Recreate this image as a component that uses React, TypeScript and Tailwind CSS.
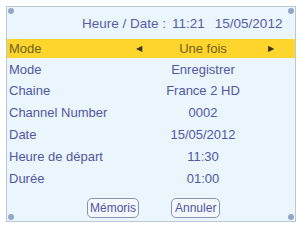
const rows = [
  { label: 'Mode', value: 'Enregistrer' },
  { label: 'Chaine', value: 'France 2 HD' },
  { label: 'Channel Number', value: '0002' },
  { label: 'Date', value: '15/05/2012' },
  { label: 'Heure de départ', value: '11:30' },
  { label: 'Durée', value: '01:00' },
]

function Dot({ className }: { className: string }) {
  return <div className={`absolute w-[6px] h-[6px] rounded-full bg-[#93a8c6] ${className}`} />
}

export default function App() {
  return (
    <div className="w-[301px] h-[226px] bg-white p-[6px] pr-[5px] pb-[4px] font-['Liberation_Sans',Arial,sans-serif]">
      <div className="relative h-full bg-[#ebf6fc] border border-[#b9c9d9] flex flex-col text-[13px] text-[#5257a2]">
        <Dot className="left-[1px] top-[1px]" />
        <Dot className="right-[1px] top-[1px]" />
        <Dot className="left-[1px] bottom-[1px]" />
        <Dot className="right-[1px] bottom-[1px]" />

        <div className="h-[32px] flex items-end pb-[5px] pl-[75px] text-[13.5px] text-[#575ca5]">
          <span>Heure / Date :</span>
          <span className="ml-[6px]">11:21</span>
          <span className="ml-[10px]">15/05/2012</span>
        </div>

        <div className="h-[19px] bg-[#fdd52c] flex items-center text-[#6e6220]">
          <span className="pl-[2px] w-[129px]">Mode</span>
          <span className="text-[8px] w-[8px] text-[#3d3415]">◀</span>
          <span className="w-[118px] text-center">Une fois</span>
          <span className="text-[8px] ml-[6px] text-[#3d3415]">▶</span>
        </div>

        {rows.map((r) => (
          <div key={r.label} className="h-[21.8px] flex items-center pt-[1px]">
            <span className="pl-[2px] w-[142px]">{r.label}</span>
            <span className="w-[108px] text-center">{r.value}</span>
          </div>
        ))}

        <div className="flex gap-[32px] pl-[80px] mt-[9px]">
          <button className="h-[20px] px-[2px] rounded-[5px] border-[1.5px] border-[#8993b2] bg-[#f4f8fc] leading-none text-[12px] text-[#4f55a0]">Mémoris</button>
          <button className="h-[20px] px-[3px] rounded-[5px] border-[1.5px] border-[#8993b2] bg-[#f4f8fc] leading-none text-[12px] text-[#4f55a0]">Annuler</button>
        </div>
      </div>
    </div>
  )
}
